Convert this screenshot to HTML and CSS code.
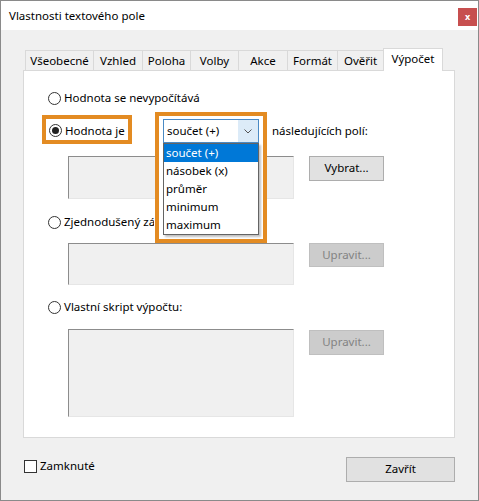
FILE: index.html
```html
<!DOCTYPE html>
<html lang="cs">
<head>
<meta charset="utf-8">
<title>Vlastnosti textového pole</title>
<link rel="stylesheet" href="styles.css">
</head>
<body>
<div class="window">
  <div class="titlebar">
    <span class="title">Vlastnosti textového pole</span>
    <span class="close">x</span>
  </div>
  <div class="content">
    <div class="tabs">
      <div class="tab t1">Všeobecné</div>
      <div class="tab t2">Vzhled</div>
      <div class="tab t3">Poloha</div>
      <div class="tab t4">Volby</div>
      <div class="tab t5">Akce</div>
      <div class="tab t6">Formát</div>
      <div class="tab t7">Ověřit</div>
      <div class="tab t8 active">Výpočet</div>
    </div>
    <div class="panel">
      <div class="opt opt1"><span class="radio"></span><span>Hodnota se nevypočítává</span></div>
      <div class="row2">
        <div class="hl-radio"><span class="radio on"></span><span>Hodnota je</span></div>
        <div class="combo-wrap">
          <div class="combo">
            <span class="combo-text">součet (+)</span>
            <span class="combo-btn"><svg width="8" height="5" viewBox="0 0 8 5"><path d="M0.5 0.5 L4 4 L7.5 0.5" fill="none" stroke="#555" stroke-width="1"/></svg></span>
          </div>
          <div class="hl-frame"></div>
          <ul class="droplist">
            <li class="sel">součet (+)</li>
            <li>násobek (x)</li>
            <li>průměr</li>
            <li>minimum</li>
            <li>maximum</li>
          </ul>
        </div>
        <span class="after">následujících polí:</span>
      </div>
      <div class="fieldrow fr1">
        <div class="field f1"></div>
        <div class="btn">Vybrat...</div>
      </div>
      <div class="opt opt3"><span class="radio"></span><span class="clipped">Zjednodušený zápis pole:</span></div>
      <div class="fieldrow fr2">
        <div class="field f2"></div>
        <div class="btn disabled b2">Upravit...</div>
      </div>
      <div class="opt opt4"><span class="radio"></span><span>Vlastní skript výpočtu:</span></div>
      <div class="fieldrow fr3">
        <div class="field f3"></div>
        <div class="btn disabled b3">Upravit...</div>
      </div>
    </div>
    <div class="footer">
      <div class="check"><span class="box"></span><span>Zamknuté</span></div>
      <div class="btn close-btn">Zavřít</div>
    </div>
  </div>
</div>
</body>
</html>
```
FILE: styles.css
```css
* { box-sizing: border-box; }
html, body { margin: 0; padding: 0; }
body {
  font-family: "Noto Sans", "Open Sans", sans-serif;
  font-size: 11px;
  color: #000;
  background: #fff;
}
.window {
  width: 479px;
  height: 501px;
  border: 1px solid #8a8a8a;
  background: #f0f0f0;
  display: flex;
  flex-direction: column;
}
.titlebar {
  height: 29px;
  background: #fff;
  display: flex;
  align-items: flex-start;
  padding-left: 8px;
}
.title {
  font-size: 11.5px;
  line-height: 16px;
  margin-top: 7px;
}
.close {
  margin-left: auto;
  margin-right: 1px;
  margin-top: 7px;
  width: 19px;
  height: 18px;
  background: #c74f4f;
  color: #fff;
  font-size: 9px;
  font-weight: bold;
  line-height: 17px;
  text-align: center;
}
.content {
  flex: 1;
  padding: 18px 24px 0 22px;
  display: flex;
  flex-direction: column;
}
.tabs {
  display: flex;
  align-items: flex-end;
  height: 22px;
  padding-left: 2px;
  position: relative;
  z-index: 2;
}
.tab {
  height: 20px;
  border: 1px solid #d9d9d9;
  border-bottom: none;
  margin-right: -1px;
  text-align: center;
  line-height: 19px;
  background: #f0f0f0;
  font-size: 11.5px;
}
.t1 { width: 69px; }
.t2 { width: 50px; }
.t3 { width: 49px; }
.t4 { width: 49px; }
.t5 { width: 50px; }
.t6 { width: 51px; }
.t7 { width: 47px; }
.t8 { width: 60px; }
.tab.active {
  height: 23px;
  margin-bottom: -1px;
  background: #fff;
  line-height: 20px;
}
.panel {
  width: 432px;
  height: 368px;
  background: #fff;
  border: 1px solid #d9d9d9;
  padding-left: 24px;
  padding-top: 19px;
  position: relative;
}
.opt {
  display: flex;
  align-items: center;
  height: 16px;
  line-height: 16px;
  font-size: 11.5px;
}
.clipped {
  display: block;
  width: 90px;
  overflow: hidden;
  white-space: nowrap;
}
.radio {
  width: 13px;
  height: 13px;
  border: 1px solid #333;
  border-radius: 50%;
  background: #fff;
  margin-right: 3px;
  position: relative;
  flex: none;
}
.radio.on::after {
  content: "";
  position: absolute;
  left: 2px;
  top: 2px;
  width: 7px;
  height: 7px;
  border-radius: 50%;
  background: #222;
}
.row2 {
  display: flex;
  align-items: flex-start;
  margin-top: 9px;
  height: 29px;
  margin-left: -6px;
  font-size: 11.5px;
}
.hl-radio {
  width: 90px;
  height: 29px;
  border: 4px solid #e38b22;
  display: flex;
  align-items: center;
  padding-left: 3px;
  padding-top: 2px;
  line-height: 16px;
}
.combo-wrap {
  position: relative;
  margin-left: 31px;
  margin-top: 4px;
  width: 96px;
  height: 24px;
}
.combo {
  position: relative;
  z-index: 3;
  width: 96px;
  height: 24px;
  border: 1px solid #4a8ac4;
  background: #fff;
  display: flex;
}
.combo-text {
  flex: 1;
  padding-left: 3px;
  line-height: 21px;
}
.combo-btn {
  width: 20px;
  background: #dcebf8;
  display: flex;
  align-items: center;
  justify-content: center;
}
.hl-frame {
  position: absolute;
  left: -8px;
  top: -7px;
  width: 112px;
  height: 131px;
  border: 4px solid #e38b22;
  background: #fff;
  z-index: 1;
}
.droplist {
  position: absolute;
  left: 0;
  top: 24px;
  width: 96px;
  margin: 0;
  padding: 0;
  list-style: none;
  border: 1px solid #646464;
  background: #fff;
  z-index: 4;
  box-shadow: 2px 2px 2px rgba(0,0,0,0.25);
}
.droplist li {
  height: 18px;
  line-height: 18px;
  padding-left: 2px;
}
.droplist li.sel {
  background: #0078d7;
  color: #fff;
}
.after {
  margin-left: 13px;
  margin-top: 4px;
  line-height: 24px;
}
.fieldrow {
  display: flex;
  align-items: flex-start;
  padding-left: 20px;
}
.field {
  width: 226px;
  background: #f0f0f0;
  border-top: 1px solid #8c8c8c;
  border-left: 1px solid #8c8c8c;
  border-right: 1px solid #e6e6e6;
  border-bottom: 1px solid #e6e6e6;
}
.fr1 { margin-top: 12px; }
.f1 { height: 43px; }
.fr2 { margin-top: 13px; }
.f2 { height: 42px; }
.fr3 { margin-top: 14px; }
.f3 { height: 88px; }
.btn {
  margin-left: 15px;
  width: 75px;
  height: 25px;
  background: #e1e1e1;
  border: 1px solid #adadad;
  text-align: center;
  line-height: 22px;
  font-size: 11.5px;
}
.btn.disabled {
  background: #cccccc;
  border-color: #bfbfbf;
  color: #838383;
}
.b2 { height: 24px; line-height: 21px; }
.b3 { margin-top: 1px; }
.opt3 { margin-top: 15px; }
.opt4 { margin-top: 14px; }
.footer {
  display: flex;
  justify-content: space-between;
  align-items: flex-start;
  margin-top: 19px;
  margin-right: -1px;
}
.check {
  display: flex;
  align-items: center;
  margin-top: 1px;
  margin-left: 1px;
  font-size: 11.5px;
  line-height: 16px;
}
.box {
  width: 13px;
  height: 13px;
  border: 1px solid #333;
  background: #fff;
  margin-right: 3px;
}
.close-btn {
  width: 109px;
  height: 25px;
}
```
